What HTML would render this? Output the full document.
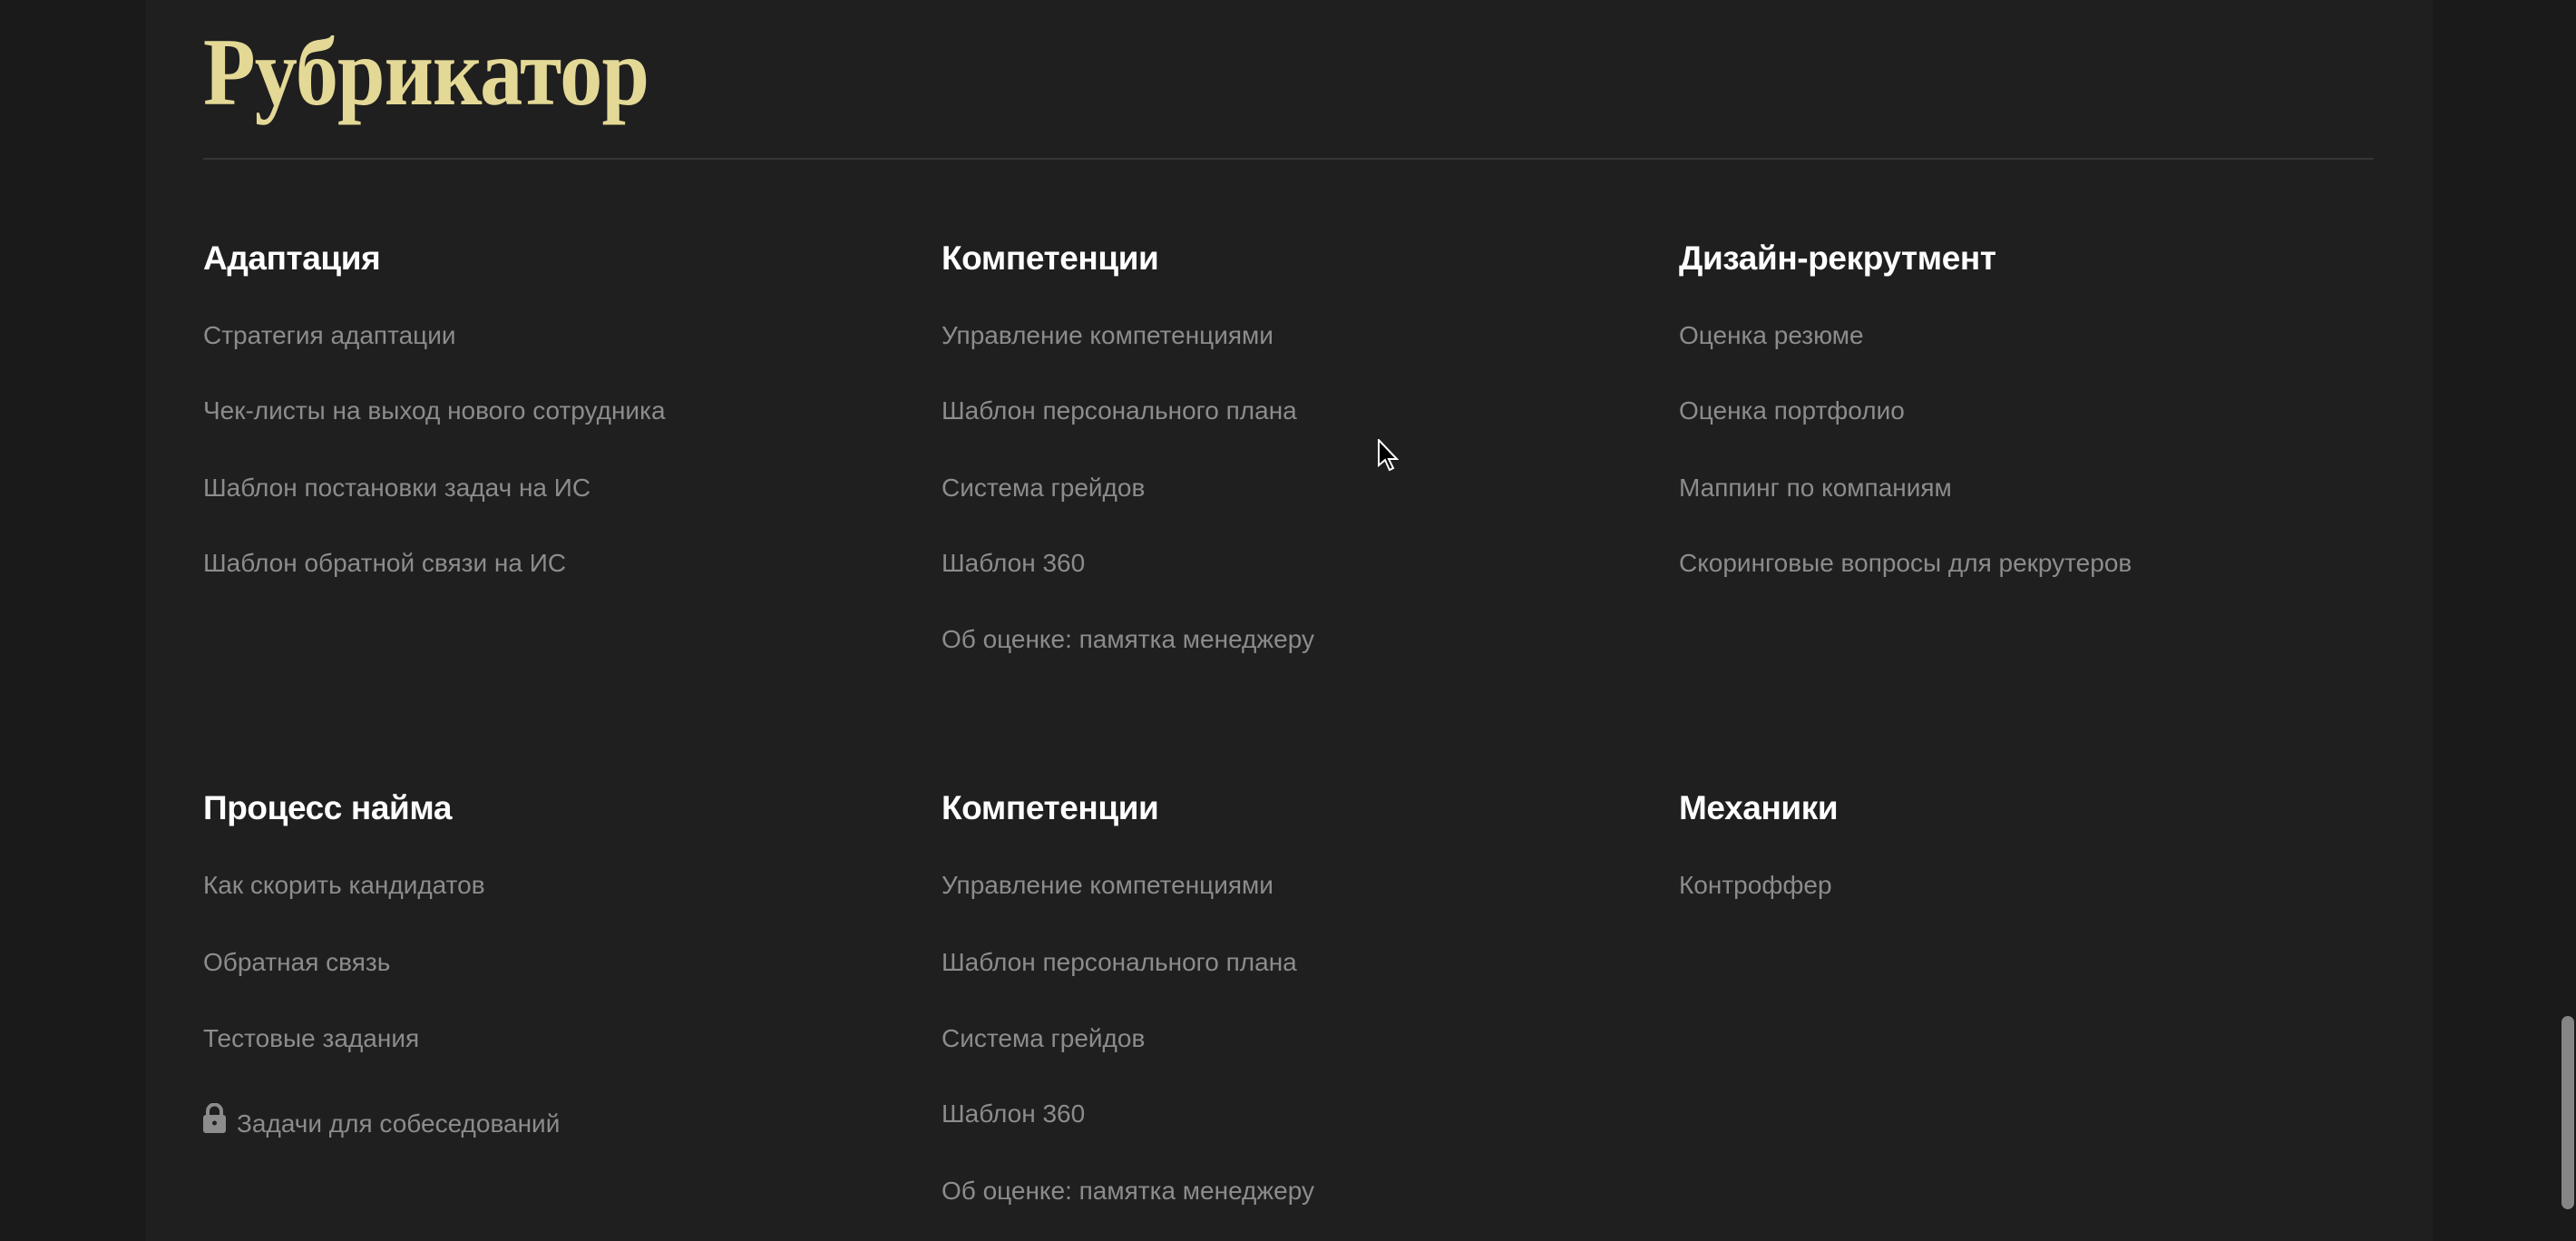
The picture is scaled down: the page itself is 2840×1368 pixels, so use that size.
<!DOCTYPE html>
<html><head><meta charset="utf-8"><style>
html,body{margin:0;padding:0;width:2840px;height:1368px;overflow:hidden;background:#1a1a1a}
#panel{position:absolute;left:161px;top:0;width:2521px;height:1368px;background:#1f1f1f}
.t{position:absolute;white-space:nowrap;font-family:"Liberation Sans","Noto Sans CJK SC",sans-serif}
.title{left:224px;top:20px;font-family:"Liberation Serif","Noto Serif CJK SC",serif;font-weight:bold;font-size:106px;line-height:120px;color:#e4d896;transform:scaleX(0.89);transform-origin:left top;letter-spacing:-1px}
.hr{position:absolute;left:224px;top:174px;width:2393px;height:2px;background:#363636}
.h{font-weight:bold;font-size:37px;line-height:44px;color:#fff;letter-spacing:-0.4px}
.l{font-size:28px;line-height:40px;color:#8c8c8c}
#sb{position:absolute;left:2824px;top:1120px;width:14px;height:213px;border-radius:7px;background:#858585}
</style></head><body>
<div id="panel"></div>
<div class="t title">Рубрикатор</div>
<div class="hr"></div>

<div class="t h" style="left:224px;top:263px">Адаптация</div>
<div class="t l" style="left:224px;top:350px">Стратегия адаптации</div>
<div class="t l" style="left:224px;top:433px">Чек-листы на выход нового сотрудника</div>
<div class="t l" style="left:224px;top:518px">Шаблон постановки задач на ИС</div>
<div class="t l" style="left:224px;top:601px">Шаблон обратной связи на ИС</div>

<div class="t h" style="left:1038px;top:263px">Компетенции</div>
<div class="t l" style="left:1038px;top:350px">Управление компетенциями</div>
<div class="t l" style="left:1038px;top:433px">Шаблон персонального плана</div>
<div class="t l" style="left:1038px;top:518px">Система грейдов</div>
<div class="t l" style="left:1038px;top:601px">Шаблон 360</div>
<div class="t l" style="left:1038px;top:685px">Об оценке: памятка менеджеру</div>

<div class="t h" style="left:1851px;top:263px">Дизайн-рекрутмент</div>
<div class="t l" style="left:1851px;top:350px">Оценка резюме</div>
<div class="t l" style="left:1851px;top:433px">Оценка портфолио</div>
<div class="t l" style="left:1851px;top:518px">Маппинг по компаниям</div>
<div class="t l" style="left:1851px;top:601px">Скоринговые вопросы для рекрутеров</div>

<div class="t h" style="left:224px;top:869px">Процесс найма</div>
<div class="t l" style="left:224px;top:956px">Как скорить кандидатов</div>
<div class="t l" style="left:224px;top:1041px">Обратная связь</div>
<div class="t l" style="left:224px;top:1125px">Тестовые задания</div>
<svg style="position:absolute;left:224px;top:1216px" width="25" height="33" viewBox="0 0 25 33"><path d="M5 14V9a7.5 7.5 0 0 1 15 0v5" fill="none" stroke="#8c8c8c" stroke-width="4"/><rect x="0" y="13" width="25" height="20" rx="3" fill="#8c8c8c"/><circle cx="12.5" cy="22" r="2.5" fill="#1f1f1f"/></svg>
<div class="t l" style="left:261px;top:1219px">Задачи для собеседований</div>

<div class="t h" style="left:1038px;top:869px">Компетенции</div>
<div class="t l" style="left:1038px;top:956px">Управление компетенциями</div>
<div class="t l" style="left:1038px;top:1041px">Шаблон персонального плана</div>
<div class="t l" style="left:1038px;top:1125px">Система грейдов</div>
<div class="t l" style="left:1038px;top:1208px">Шаблон 360</div>
<div class="t l" style="left:1038px;top:1293px">Об оценке: памятка менеджеру</div>

<div class="t h" style="left:1851px;top:869px">Механики</div>
<div class="t l" style="left:1851px;top:956px">Контроффер</div>

<svg style="position:absolute;left:1519px;top:484px" width="24" height="36" viewBox="0 0 24 36"><path d="M1 1v28l7-6 5 11 4-2-5-10h9z" fill="#000" stroke="#fff" stroke-width="2"/></svg>
<div id="sb"></div>
</body></html>
